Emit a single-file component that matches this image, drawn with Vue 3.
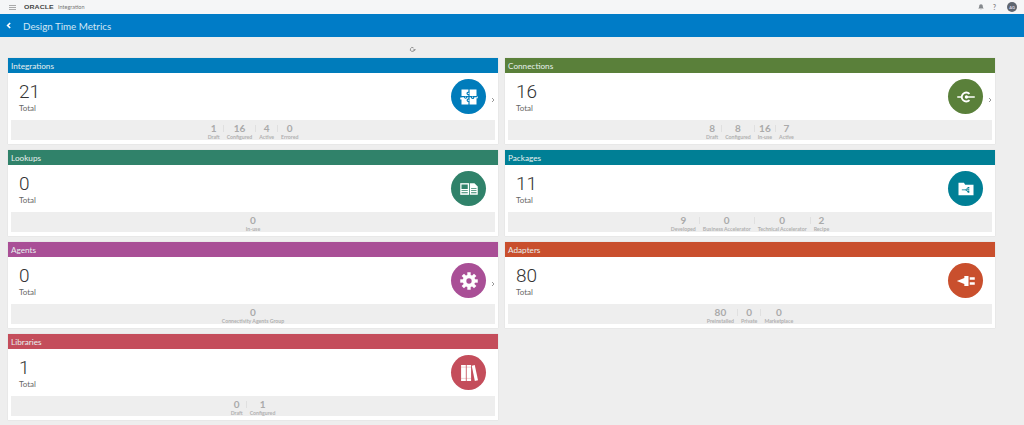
<script setup>
const cards = [
  { title: 'Integrations', total: 21, color: '#007cbb', icon: 'puzzle', more: true, stats: [['1', 'Draft'], ['16', 'Configured'], ['4', 'Active'], ['0', 'Errored']] },
  { title: 'Connections', total: 16, color: '#5a803a', icon: 'conn', more: true, stats: [['8', 'Draft'], ['8', 'Configured'], ['16', 'In-use'], ['7', 'Active']] },
  { title: 'Lookups', total: 0, color: '#30826a', icon: 'lookup', stats: [['0', 'In-use']] },
  { title: 'Packages', total: 11, color: '#007f95', icon: 'pack', stats: [['9', 'Developed'], ['0', 'Business Accelerator'], ['0', 'Technical Accelerator'], ['2', 'Recipe']] },
  { title: 'Agents', total: 0, color: '#a94f96', icon: 'gear', more: true, stats: [['0', 'Connectivity Agents Group']] },
  { title: 'Adapters', total: 80, color: '#c94f2d', icon: 'plug', stats: [['80', 'Preinstalled'], ['0', 'Private'], ['0', 'Marketplace']] },
  { title: 'Libraries', total: 1, color: '#c44d5b', icon: 'books', stats: [['0', 'Draft'], ['1', 'Configured']] }
]
const gearTeeth = [0, 45, 90, 135, 180, 225, 270, 315]
</script>

<template>
  <div class="page">
    <header class="topbar">
      <div class="brand">
        <span class="burger"><i></i><i></i><i></i></span>
        <span class="oracle">ORACLE</span>
        <span class="product">Integration</span>
      </div>
      <div class="tools">
        <svg class="bell" viewBox="0 0 10 10" width="6" height="6"><path d="M5 0.5c-2 0-3 1.500-3 3.200 0 2-.7 2.600-1.400 3.300v.7h8.800v-.7c-.7-.7-1.400-1.300-1.400-3.300 0-1.700-1-3.200-3-3.200zM4 8.700h2l-1 1z" fill="#85898d"/></svg>
        <span class="help">?</span>
        <span class="avatar">AG</span>
      </div>
    </header>
    <div class="titlebar">
      <svg class="back" viewBox="0 0 6 8" width="5" height="7"><path d="M5 1 2 4l3 3" fill="none" stroke="#fff" stroke-width="2"/></svg>
      <h1>Design Time Metrics</h1>
    </div>
    <div class="refresh">
      <svg viewBox="0 0 10 10" width="7" height="7"><path d="M7.500 5a2.800 2.800 0 1 1-1-2.200" fill="none" stroke="#888" stroke-width="1.300"/><path d="M6 4.500h4L8 7z" fill="#888"/></svg>
    </div>
    <main class="grid">
      <section v-for="c in cards" :key="c.title" class="card">
        <h2 class="head" :style="{ background: c.color }">{{ c.title }}</h2>
        <div class="body">
          <div class="summary">
            <div class="num">{{ c.total }}</div>
            <div class="lbl">Total</div>
          </div>
          <div class="badge" :style="{ background: c.color }">
            <svg viewBox="0 0 24 24" width="20" height="20">
              <g v-if="c.icon === 'puzzle'">
                <path d="M3 3h18v8h1.500v2.500H21V21H3v-6H1.500v-2.500H3z" fill="#fff"/>
                <path d="M12 2v4.500c-1.700-.7-2.500.6-2.300 1.500.2.900 1.200 1.400 2.300.8v2.700H9c.6 1.100-.1 2-1 2s-1.700-.9-1-2H2M12 11.500h3.200c-.7 1.100 0 2.200 1.100 2.200s1.900-1.100 1.100-2.200H22M12 11.500v3.300c-1.200-.6-2.200.2-2.200 1.200s1 1.700 2.200 1.100V22" fill="none" :stroke="c.color" stroke-width="1.400"/>
              </g>
              <g v-else-if="c.icon === 'conn'">
                <path d="M16.200 8.300a5.400 5.400 0 1 0 0 7.400" fill="none" stroke="#fff" stroke-width="2.200"/>
                <circle cx="12.500" cy="12" r="2" fill="#fff"/>
                <path d="M1.500 11.200h4.500v1.600H1.500zM13 11h9.500v2H13z" fill="#fff"/>
              </g>
              <g v-else-if="c.icon === 'lookup'">
                <path d="M1.500 5h10.500v14H1.500z" fill="#fff"/>
                <path d="M3 6.500h7.500v5.500H3zM3 13.500h7.500v1H3zM3 16h7.500v1H3z" :fill="c.color"/>
                <path d="M13 5h5.500l4 4v10H13z" fill="#fff"/>
                <path d="M14.500 11h6.500v1h-6.500zM14.500 13.500h6.500v1h-6.500zM14.500 16h6.500v1h-6.500z" :fill="c.color"/>
              </g>
              <g v-else-if="c.icon === 'pack'">
                <path d="M3 4.500h6.500l1.500 2.500h10v12.500H3z" fill="#fff"/>
                <path d="M7 13h4.500M11.500 13l3-2.500M11.500 13l3 2.500M11.500 13h3" fill="none" :stroke="c.color" stroke-width="1"/>
                <path d="M14 9.500h2v2h-2zM14 14.500h2v2h-2zM14 12.200h2v1.600h-2z" :fill="c.color"/>
              </g>
              <g v-else-if="c.icon === 'gear'" fill="#fff">
                <rect v-for="a in gearTeeth" :key="a" x="10" y="1.500" width="4" height="5" :transform="`rotate(${a} 12 12)`"/>
                <path fill-rule="evenodd" d="M12 4.500a7.500 7.500 0 1 0 0 15 7.500 7.500 0 0 0 0-15zm0 4.300a3.200 3.200 0 1 1 0 6.400 3.200 3.200 0 0 1 0-6.400z"/>
              </g>
              <g v-else-if="c.icon === 'plug'" fill="#fff">
                <path d="M1 12l9-3.500V6h5v12h-5v-2.500z"/>
                <path d="M16.500 7.500h6v3h-6zM16.500 13.500h6v3h-6z"/>
              </g>
              <g v-else>
                <path d="M2.500 2.500h5.700v19H2.500zM9.200 2.500h5.300v19H9.200z" fill="#fff"/>
                <path d="M15.300 3.300l3.600-.8 3.900 18.200-3.800.9z" fill="#fff"/>
                <path d="M2.500 5h12M2.500 18.500h12" :stroke="c.color" stroke-width=".6" opacity=".5"/>
              </g>
            </svg>
          </div>
          <svg v-if="c.more" class="chev" viewBox="0 0 6 8" width="4" height="6"><path d="M1.500 1l3 3-3 3" fill="none" stroke="#999" stroke-width="1.500"/></svg>
        </div>
        <div class="strip">
          <template v-for="(s, i) in c.stats" :key="s[1]">
            <i v-if="i" class="sep"></i>
            <div class="stat">
              <b>{{ s[0] }}</b>
              <span>{{ s[1] }}</span>
            </div>
          </template>
        </div>
      </section>
    </main>
  </div>
</template>

<style scoped>
.page { width: 1024px; height: 425px; overflow: hidden; background: #eeeeee; font-family: Lato, "Open Sans", sans-serif; }
.topbar { height: 14px; background: #f5f6f7; display: flex; justify-content: space-between; align-items: center; padding: 0 7px 0 9px; box-sizing: border-box; }
.brand { display: flex; align-items: center; }
.burger { width: 7px; display: flex; flex-direction: column; gap: 1px; margin-right: 8px; }
.burger i { height: 1px; background: #aaa; display: block; }
.oracle { font: 700 6px "Liberation Sans", sans-serif; letter-spacing: 0.1px; color: #444; width: 31px; transform: scaleX(1.15); transform-origin: left; }
.product { font-size: 5.500px; color: #777; margin-left: 3px; }
.tools { display: flex; align-items: center; }
.bell { margin-right: 9px; }
.help { font-size: 6.500px; color: #888; margin-right: 11px; font-weight: 700; }
.avatar { width: 10px; height: 10px; border-radius: 50%; background: #5f6670; color: #dde; font-size: 4px; font-weight: 700; display: flex; align-items: center; justify-content: center; }
.titlebar { height: 23px; background: #007cc7; display: flex; align-items: center; padding-left: 6px; }
.back { margin-right: 12px; }
h1 { margin: 0; font-size: 9.800px; font-weight: 400; color: #d4e7f4; }
.refresh { height: 21px; display: flex; align-items: center; justify-content: center; width: 824px; padding-top: 4px; box-sizing: border-box; }
.grid { display: grid; grid-template-columns: 490px 490px; column-gap: 7px; row-gap: 6px; padding-left: 8px; }
.card { height: 86px; background: #fff; display: flex; flex-direction: column; box-shadow: 0 0 1px rgba(0, 0, 0, 0.15); }
.head { margin: 0; height: 15px; line-height: 17px; padding-left: 3px; font-size: 8.200px; font-weight: 400; color: #e8f0ee; flex: none; overflow: hidden; }
.body { flex: 1; display: flex; align-items: center; position: relative; padding: 0 12px 0 11px; }
.summary { flex: 1; align-self: flex-start; padding-top: 7px; }
.num { font-family: Roboto, sans-serif; font-size: 19px; line-height: 23px; font-weight: 300; color: #333; }
.lbl { font-size: 8px; line-height: 10px; color: #666; }
.badge { width: 35px; height: 35px; border-radius: 50%; display: flex; align-items: center; justify-content: center; }
.chev { position: absolute; right: 3px; top: 24px; }
.strip { height: 20px; margin: 0 3px 4px; background: #eeeeee; display: flex; justify-content: center; align-items: flex-end; flex: none; }
.stat { display: flex; flex-direction: column; align-items: center; padding: 0 3px; height: 18px; }
.sep { width: 1px; height: 7px; background: #e0e0e0; align-self: center; margin-top: -3px; }
.stat b { font-size: 10px; line-height: 12px; font-weight: 700; color: #aaa; }
.stat span { font-size: 5.200px; line-height: 6px; font-weight: 700; color: #b0b0b0; white-space: nowrap; }
</style>
